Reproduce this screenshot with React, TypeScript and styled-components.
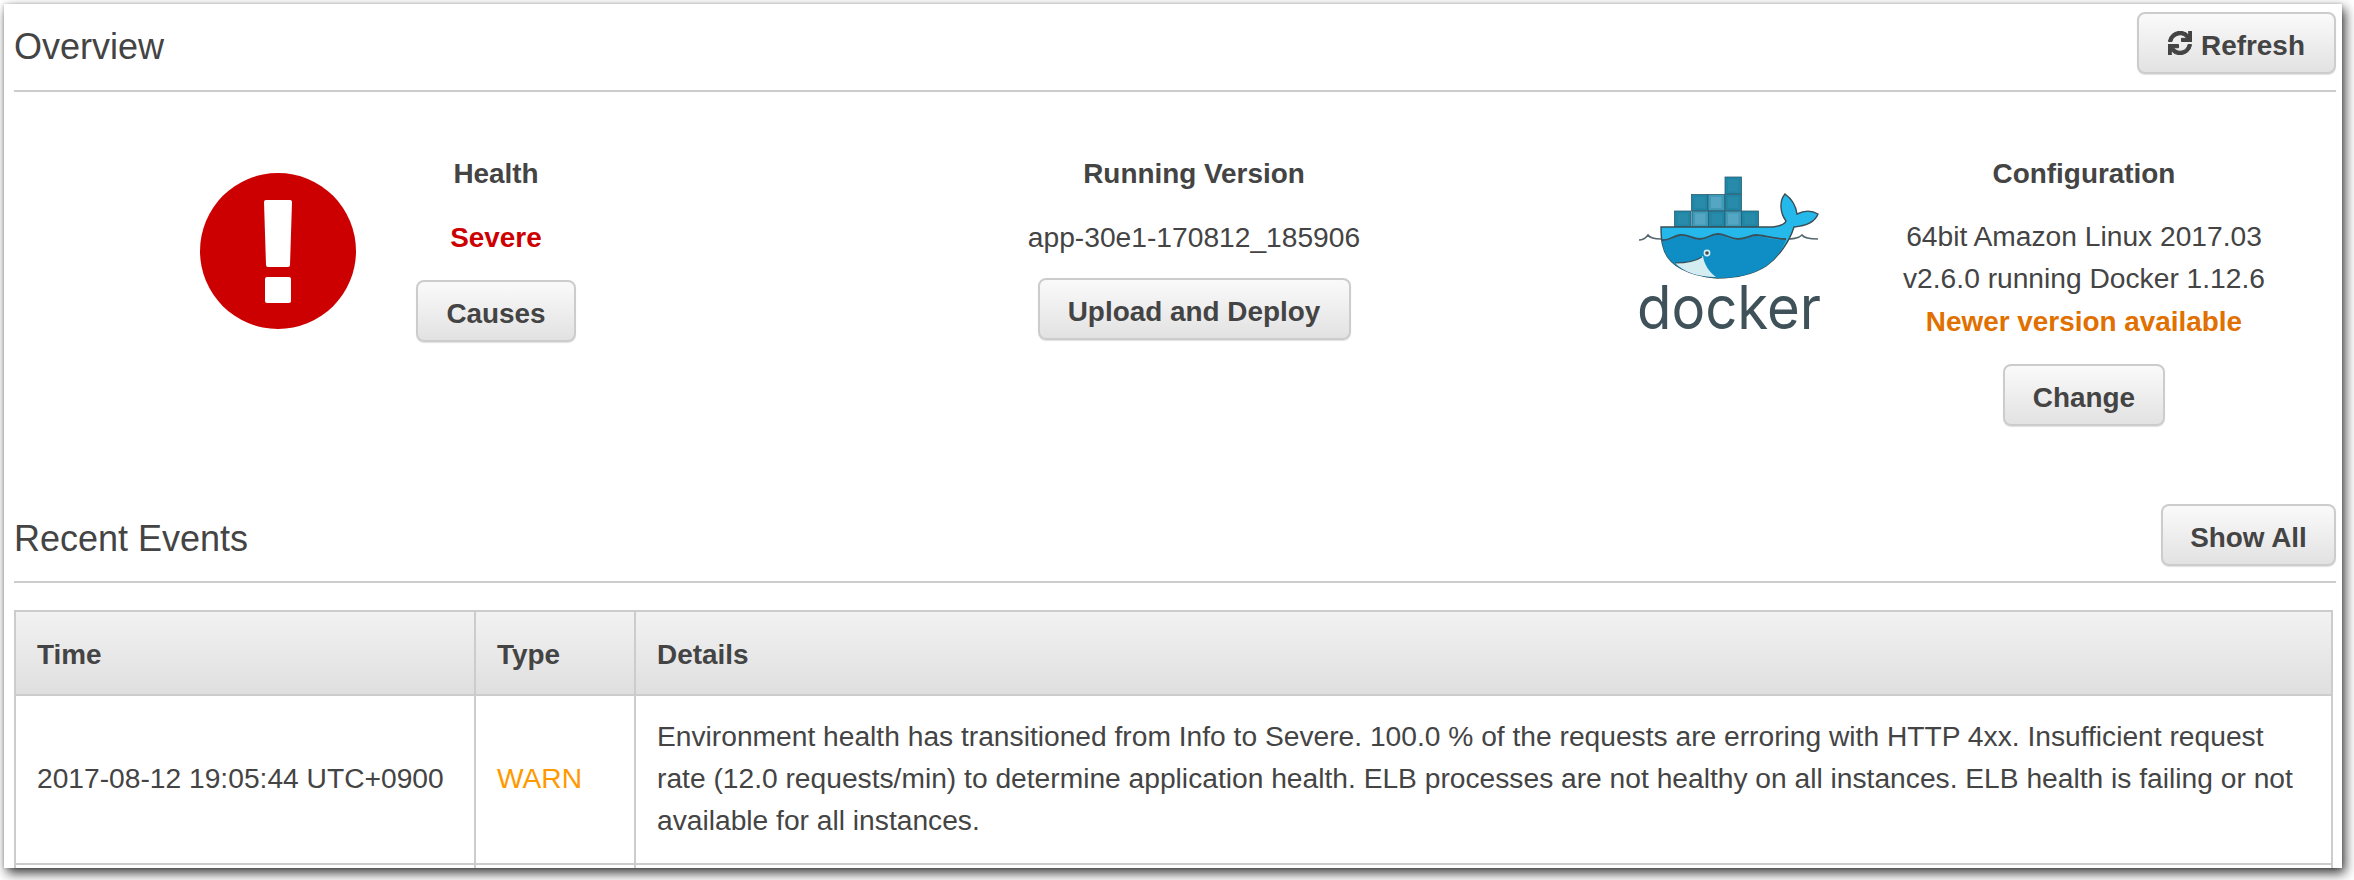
import React from "react";
import styled, { createGlobalStyle } from "styled-components";
import { FaSync } from "react-icons/fa";

const Global = createGlobalStyle`
  html, body { margin: 0; padding: 0; background: #fff; }
  body { width: 2354px; height: 880px; overflow: hidden; font-family: "Liberation Sans", Arial, sans-serif; color: #444; }
`;

const Page = styled.div`
  padding: 4px 12px 12px 4px;
  height: 880px;
  box-sizing: border-box;
`;

const Window = styled.main`
  height: 864px;
  box-sizing: border-box;
  padding: 8px 6px 0 10px;
  background: #fff;
  overflow: hidden;
  box-shadow: 0 0 3px rgba(0, 0, 0, 0.18), 3px 5px 11px rgba(0, 0, 0, 0.78);
`;

const SectionHeader = styled.header`
  display: flex;
  justify-content: space-between;
  align-items: flex-start;
  height: ${(p) => p.$h}px;
  border-bottom: 2px solid #ccc;
`;

const Heading = styled.h2`
  margin: 0;
  padding-top: 14px;
  font-size: 36px;
  line-height: 42px;
  font-weight: 400;
  color: #444;
`;

const Button = styled.button`
  display: inline-flex;
  align-items: center;
  justify-content: center;
  gap: 9px;
  height: 62px;
  width: ${(p) => p.$w}px;
  box-sizing: border-box;
  padding: 6px 0 0;
  border: 2px solid #ccc;
  border-radius: 8px;
  background: linear-gradient(#fafafa, #e2e2e2);
  box-shadow: 0 1px 1px rgba(0, 0, 0, 0.12);
  color: #444;
  font-family: inherit;
  font-size: 27.9px;
  font-weight: 700;
`;

const RefreshIcon = styled(FaSync)`
  width: 24px;
  height: 24px;
  margin-top: -6px;
  stroke: currentColor;
  stroke-width: 22px;
`;

const Overview = styled.section`
  display: flex;
  align-items: flex-start;
  height: 412px;
  padding-top: 61px;
  box-sizing: border-box;
`;

const Panel = styled.div`
  display: flex;
  align-items: flex-start;
  margin-left: ${(p) => p.$offset}px;
`;

const IconSlot = styled.div`
  display: flex;
  justify-content: center;
  width: 256px;
  padding-top: 20px;
`;

const Info = styled.div`
  display: flex;
  flex-direction: column;
  align-items: center;
  width: ${(p) => p.$w}px;
`;

const Title = styled.div`
  font-size: 27.9px;
  line-height: 42px;
  font-weight: 700;
  margin-bottom: 20px;
`;

const Line = styled.div`
  font-size: ${(p) => (p.$bold ? 27.9 : 28.2)}px;
  line-height: 42px;
  white-space: nowrap;
  color: ${(p) => p.$color || "#444"};
  font-weight: ${(p) => (p.$bold ? 700 : 400)};
`;

const Status = styled(Line)`
  margin-top: 2px;
  margin-bottom: 21px;
`;

const Version = styled(Line)`
  margin-top: 1px;
  margin-bottom: 20px;
`;

const Notice = styled(Line)`
  margin-top: 2px;
  margin-bottom: 21px;
`;

const LogoSlot = styled.div`
  width: 220px;
  margin-top: 17px;
  margin-right: 44px;
  line-height: 0;
`;

const Table = styled.table`
  width: 2319px;
  margin-top: 27px;
  table-layout: fixed;
  border-collapse: collapse;
  font-size: 28.2px;
  line-height: 42px;
  color: #444;
`;

const Th = styled.th`
  height: 84px;
  box-sizing: border-box;
  padding: 4px 21px 0;
  border: 2px solid #ccc;
  background: linear-gradient(#f2f2f2, #dfdfdf);
  text-align: left;
  font-size: 27.9px;
  font-weight: 700;
`;

const Td = styled.td`
  padding: 19px 21px 22px;
  border: 2px solid #ccc;
  vertical-align: middle;
  color: ${(p) => p.$color || "#444"};
`;

const AlertIcon = () => (
  <svg width="156" height="156" viewBox="0 0 156 156" aria-hidden="true">
    <circle cx="78" cy="78" r="78" fill="#cc0000" />
    <path d="M66 27h24a2 2 0 0 1 2 2l-2 63a2 2 0 0 1-2 2H68a2 2 0 0 1-2-2L64 29a2 2 0 0 1 2-2z" fill="#fff" />
    <rect x="65" y="104" width="26" height="26" rx="2" fill="#fff" />
  </svg>
);

const Box = ({ x, y, w = 16.5, h = 16, light }: { x: number; y: number; w?: number; h?: number; light?: boolean }) => (
  <g>
    <rect x={x} y={y} width={w} height={h} fill={light ? "#3f9ab8" : "#1f86a6"} stroke="#2b5f73" strokeWidth="0.8" />
    <rect x={x + 3} y={y + 2.5} width={w - 6} height={h - 5} fill={light ? "#5aa9c4" : "#2b8cab"} opacity="0.8" />
  </g>
);

const DockerLogo = () => (
  <svg width="220" height="180" viewBox="0 0 220 180" style={{ filter: "blur(0.35px)" }} aria-label="docker">
    <Box x={105} y={7} h={17} />
    <Box x={71.5} y={24.5} />
    <Box x={88} y={24.5} light />
    <Box x={105} y={24.5} />
    <Box x={54.5} y={41} />
    <Box x={72} y={41} light />
    <Box x={88.5} y={41} />
    <Box x={105} y={41} light />
    <Box x={121.5} y={41} w={17} />
    <path d="M19 70c4 0 6-1 9-5 2 3 5 4 13 4M166 69c6 0 12 0 16-4 2 3 6 4 16 4" fill="none" stroke="#56686f" strokeWidth="1.6" />
    <path
      d="M41 57 H153 C160 56 165 54 166 51 C160 43 159 31 165 24 C172 29 176 36 177 44 C185 40 193 41 198 44 C195 52 185 56 174 57 C170 70 160 86 146 96 C132 105 115 108 97 108 C70 106 47 96 43 76 C41 70 41 62 41 57 Z"
      fill="#24b8eb"
      stroke="#394d54"
      strokeWidth="1.4"
    />
    <path
      d="M42 71 C50 71 52 67 60 66 C68 65 72 70 80 70 C88 70 90 65 98 65 C106 65 110 70 118 70 C126 70 130 66 136 66 C144 66 148 70 166 70 C160 84 154 90 146 96 C132 105 115 108 97 108 C70 106 47 96 43 76 Z"
      fill="#0e8ec4"
    />
    <path d="M42 70 C50 71 52 66 60 65 C68 64 72 69 80 69 C88 69 90 64 98 64 C106 64 110 69 118 69 C126 69 130 65 136 65 C144 65 150 69 166 69" fill="none" stroke="#39505a" strokeWidth="1.8" />
    <path d="M55 93 C66 93 76 91 83 86 C84 94 89 102 96 107 C78 107 64 102 55 93 Z" fill="#d4edf1" />
    <path d="M55 93 C66 93 76 91 82 87" fill="none" stroke="#394d54" strokeWidth="1.2" />
    <circle cx="87" cy="83" r="3.4" fill="#d4edf1" />
    <circle cx="87" cy="83" r="1.8" fill="#394d54" />
    <text x="17" y="159" fontFamily="Inter, Lato, sans-serif" fontSize="60" fill="#3f5159" textLength="184" lengthAdjust="spacingAndGlyphs">
      docker
    </text>
  </svg>
);

export default function App() {
  return (
    <>
      <Global />
      <Page>
        <Window>
          <SectionHeader $h={78}>
            <Heading>Overview</Heading>
            <Button $w={199}>
              <RefreshIcon />
              Refresh
            </Button>
          </SectionHeader>

          <Overview>
            <Panel $offset={136}>
              <IconSlot>
                <AlertIcon />
              </IconSlot>
              <Info $w={180}>
                <Title>Health</Title>
                <Status $color="#cc0000" $bold>Severe</Status>
                <Button $w={160}>Causes</Button>
              </Info>
            </Panel>
            <Panel $offset={408}>
              <Info $w={400}>
                <Title>Running Version</Title>
                <Version>app-30e1-170812_185906</Version>
                <Button $w={313}>Upload and Deploy</Button>
              </Info>
            </Panel>
            <Panel $offset={226}>
              <LogoSlot>
                <DockerLogo />
              </LogoSlot>
              <Info $w={400}>
                <Title>Configuration</Title>
                <Line>64bit Amazon Linux 2017.03</Line>
                <Line>v2.6.0 running Docker 1.12.6</Line>
                <Notice $color="#e07000" $bold>Newer version available</Notice>
                <Button $w={162}>Change</Button>
              </Info>
            </Panel>
          </Overview>

          <SectionHeader $h={77}>
            <Heading>Recent Events</Heading>
            <Button $w={175}>Show All</Button>
          </SectionHeader>

          <Table>
            <colgroup>
              <col style={{ width: 460 }} />
              <col style={{ width: 160 }} />
              <col />
            </colgroup>
            <thead>
              <tr>
                <Th>Time</Th>
                <Th>Type</Th>
                <Th>Details</Th>
              </tr>
            </thead>
            <tbody>
              <tr>
                <Td>2017-08-12 19:05:44 UTC+0900</Td>
                <Td $color="#ff9900">WARN</Td>
                <Td>
                  Environment health has transitioned from Info to Severe. 100.0 % of the requests are erroring with HTTP 4xx. Insufficient request rate (12.0 requests/min) to determine application health. ELB processes are not healthy on all instances. ELB health is failing or not available for all instances.
                </Td>
              </tr>
              <tr>
                <Td>&nbsp;</Td>
                <Td>&nbsp;</Td>
                <Td>&nbsp;</Td>
              </tr>
            </tbody>
          </Table>
        </Window>
      </Page>
    </>
  );
}
